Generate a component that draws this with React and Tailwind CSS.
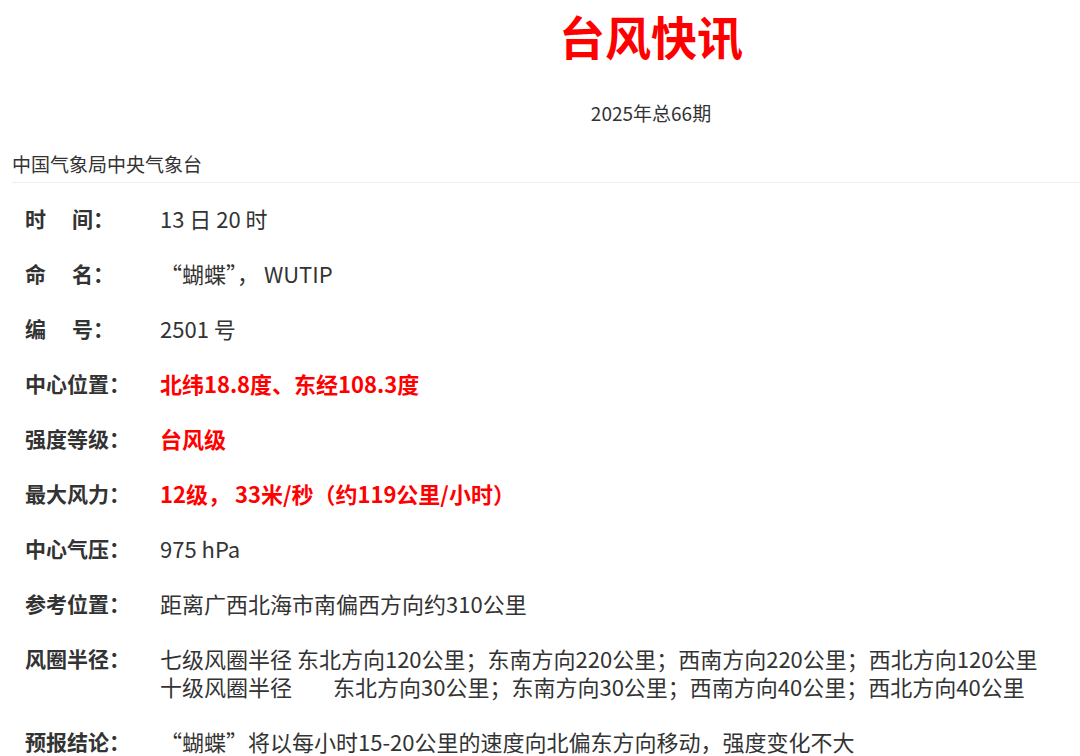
const rows = [
  { label: ["时", "间"], value: "13 日 20 时" },
  { label: ["命", "名"], value: "“蝴蝶”， WUTIP" },
  { label: ["编", "号"], value: "2501 号" },
  { label: ["中心位置"], value: "北纬18.8度、东经108.3度", red: true },
  { label: ["强度等级"], value: "台风级", red: true },
  { label: ["最大风力"], value: "12级， 33米/秒（约119公里/小时）", red: true },
  { label: ["中心气压"], value: "975 hPa" },
  { label: ["参考位置"], value: "距离广西北海市南偏西方向约310公里" },
];

function Label({ parts }) {
  return (
    <div className="w-[135px] shrink-0 text-[21px] font-bold text-[#333]">
      {parts.length === 2 ? (
        <>
          {parts[0]}
          <span className="inline-block w-[26px]" />
          {parts[1]}：
        </>
      ) : (
        <>{parts[0]}：</>
      )}
    </div>
  );
}

export default function App() {
  return (
    <div className="w-[1080px] h-[756px] overflow-hidden bg-white text-[#333] font-['Noto_Sans_CJK_SC','Noto_Sans',sans-serif]">
      {/* Header */}
      <div className="pl-[222px] text-center">
        <h1 className="pt-[7px] text-[46px] leading-[56px] font-bold text-[#ff0000]">
          台风快讯
        </h1>
        <p className="mt-[36px] text-[19px] leading-[28px]">2025年总66期</p>
      </div>

      <div className="ml-[12px] mt-[23px] pb-[4px] border-b border-[#eeeeee] text-[19px] leading-[28px]">
        中国气象局中央气象台
      </div>

      {/* Rows */}
      <div className="mt-[21px] pl-[25px] flex flex-col gap-[27px] leading-[28px]">
        {rows.map((r) => (
          <div key={r.label.join("")} className="flex">
            <Label parts={r.label} />
            <div
              className={
                r.red
                  ? "text-[22px] font-bold text-[#ff0000] whitespace-pre"
                  : "text-[22px] text-[#333] whitespace-pre"
              }
            >
              {r.value}
            </div>
          </div>
        ))}

        <div className="flex">
          <Label parts={["风圈半径"]} />
          <div className="text-[22px] whitespace-nowrap">
            <div>七级风圈半径 东北方向120公里；东南方向220公里；西南方向220公里；西北方向120公里</div>
            <div>
              十级风圈半径<span className="inline-block w-[41px]" />东北方向30公里；东南方向30公里；西南方向40公里；西北方向40公里
            </div>
          </div>
        </div>

        <div className="flex">
          <Label parts={["预报结论"]} />
          <div className="text-[22px]">“蝴蝶”将以每小时15-20公里的速度向北偏东方向移动，强度变化不大</div>
        </div>
      </div>
    </div>
  );
}
